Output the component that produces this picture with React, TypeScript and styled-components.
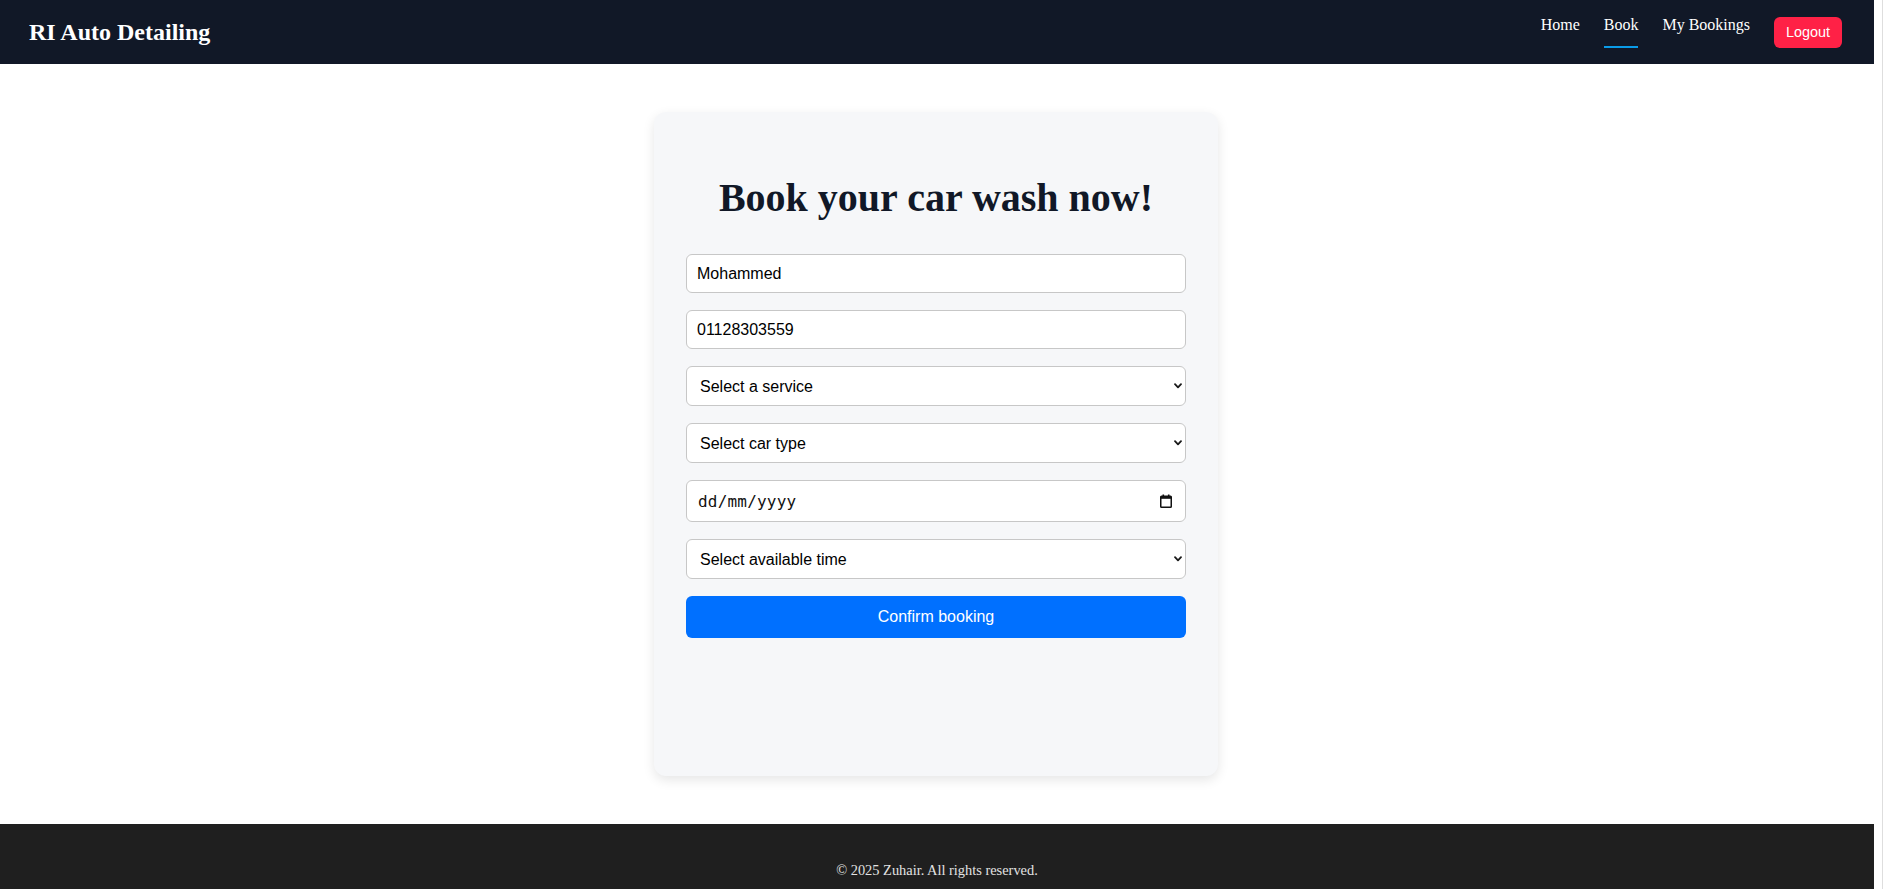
import React from "react";
import styled, { createGlobalStyle } from "styled-components";

const GlobalStyle = createGlobalStyle`
  *, *::before, *::after { box-sizing: border-box; }
  html {
    height: 100%;
    overflow: hidden;
    background: #ffffff;
    border-right: 1px solid #dedede;
  }
  body {
    margin: 0;
    height: 100%;
    overflow: hidden;
    font-family: "Liberation Serif", "Times New Roman", serif;
  }
`;

const Page = styled.div`
  width: calc(100% - 8px);
  display: flex;
  flex-direction: column;
`;

const NavBar = styled.header`
  height: 64px;
  display: flex;
  align-items: center;
  justify-content: space-between;
  padding: 0 32px 0 29px;
  background: #111827;
`;

const Logo = styled.h1`
  margin: 0;
  font-family: "Liberation Serif", "Times New Roman", serif;
  font-size: 24px;
  font-weight: 700;
  line-height: normal;
  color: #ffffff;
`;

const NavLinks = styled.nav`
  display: flex;
  align-items: center;
  gap: 24px;
`;

const NavLink = styled.a<{ $active?: boolean }>`
  color: #ffffff;
  text-decoration: none;
  font-family: "Liberation Serif", "Times New Roman", serif;
  font-size: 16px;
  line-height: normal;
  padding-bottom: 12px;
  border-bottom: 2px solid ${(p) => (p.$active ? "#0a9be8" : "transparent")};
  cursor: pointer;
`;

const LogoutButton = styled.button`
  height: 31px;
  padding: 0 12px;
  border: none;
  border-radius: 6px;
  background: #ff2146;
  color: #ffffff;
  font-family: "Liberation Sans", Arial, sans-serif;
  font-size: 14.4px;
  cursor: pointer;
`;

const Main = styled.main`
  display: flex;
  justify-content: center;
  padding: 48px 2px 48px 0;
`;

const Card = styled.section`
  width: 564px;
  min-height: 664px;
  padding: 32px;
  background: #f6f7f9;
  border-radius: 12px;
  box-shadow: 0 4px 12px rgba(0, 0, 0, 0.1);
`;

const Heading = styled.h2`
  margin: 32px 0 34px;
  font-family: "Liberation Serif", "Times New Roman", serif;
  font-size: 40px;
  font-weight: 700;
  line-height: 44px;
  text-align: center;
  color: #111827;
`;

const Form = styled.form`
  display: flex;
  flex-direction: column;
  gap: 17px;
`;

const TextInput = styled.input`
  height: 39px;
  width: 100%;
  padding: 0 10px;
  border: 1px solid #c7c7c7;
  border-radius: 6px;
  background: #ffffff;
  color: #000000;
  font-family: "Liberation Sans", Arial, sans-serif;
  font-size: 16px;
  outline: none;
`;

const SelectWrap = styled.div<{ $h?: number }>`
  position: relative;
  height: ${(p) => p.$h ?? 40}px;
`;

const Select = styled.select`
  appearance: none;
  -webkit-appearance: none;
  width: 100%;
  height: 100%;
  padding: 0 28px 0 13px;
  border: 1px solid #c7c7c7;
  border-radius: 6px;
  background: #ffffff;
  color: #000000;
  font-family: "Liberation Sans", Arial, sans-serif;
  font-size: 16px;
  outline: none;
`;

const Chevron = styled.svg`
  position: absolute;
  right: 4px;
  top: 50%;
  margin-top: -3px;
  width: 8px;
  height: 6px;
  pointer-events: none;
`;

const DateField = styled.label`
  height: 42px;
  display: flex;
  align-items: center;
  gap: 8px;
  padding: 0 13px 0 11px;
  border: 1px solid #c7c7c7;
  border-radius: 6px;
  background: #ffffff;
`;

const DateInput = styled.input`
  flex: 1;
  min-width: 0;
  border: none;
  outline: none;
  padding: 0;
  background: transparent;
  font-family: "DejaVu Sans Mono", "Liberation Mono", monospace;
  font-size: 16px;
  letter-spacing: 0.2px;
  color: #111111;
  &::placeholder {
    color: #111111;
    opacity: 1;
  }
`;

const SubmitButton = styled.button`
  height: 42px;
  border: none;
  border-radius: 6px;
  background: #0070ff;
  color: #ffffff;
  font-family: "Liberation Sans", Arial, sans-serif;
  font-size: 16px;
  cursor: pointer;
`;

const Footer = styled.footer`
  background: #1f1f1f;
  padding: 24px;
  text-align: center;
`;

const FooterText = styled.p`
  margin: 14.4px 0;
  font-family: "Liberation Serif", "Times New Roman", serif;
  font-size: 14.4px;
  color: #e2e2e2;
`;

const ChevronIcon = () => (
  <Chevron viewBox="0 0 8 6">
    <path d="M1 1.2 L4 4.4 L7 1.2" fill="none" stroke="#1a1a1a" strokeWidth="1.8" strokeLinecap="round" strokeLinejoin="round" />
  </Chevron>
);

const CalendarIcon = () => (
  <svg width="12" height="14" viewBox="0 0 12 14">
    <rect x="2.5" y="0.5" width="1.6" height="2.5" fill="#111" />
    <rect x="7.9" y="0.5" width="1.6" height="2.5" fill="#111" />
    <rect x="0.75" y="2.2" width="10.5" height="11" rx="0.8" fill="none" stroke="#111" strokeWidth="1.5" />
    <rect x="0.75" y="2.2" width="10.5" height="2.6" fill="#111" />
  </svg>
);

export default function App() {
  return (
    <>
      <GlobalStyle />
      <Page>
        <NavBar>
          <Logo>RI Auto Detailing</Logo>
          <NavLinks>
            <NavLink>Home</NavLink>
            <NavLink $active>Book</NavLink>
            <NavLink>My Bookings</NavLink>
            <LogoutButton type="button">Logout</LogoutButton>
          </NavLinks>
        </NavBar>
        <Main>
          <Card>
            <Heading>Book your car wash now!</Heading>
            <Form onSubmit={(e) => e.preventDefault()}>
              <TextInput type="text" defaultValue="Mohammed" />
              <TextInput type="tel" defaultValue="01128303559" />
              <SelectWrap>
                <Select defaultValue="">
                  <option value="">Select a service</option>
                  <option value="basic">Basic wash</option>
                  <option value="full">Full detailing</option>
                </Select>
                <ChevronIcon />
              </SelectWrap>
              <SelectWrap>
                <Select defaultValue="">
                  <option value="">Select car type</option>
                  <option value="sedan">Sedan</option>
                  <option value="suv">SUV</option>
                </Select>
                <ChevronIcon />
              </SelectWrap>
              <DateField>
                <DateInput type="text" placeholder="dd/mm/yyyy" />
                <CalendarIcon />
              </DateField>
              <SelectWrap>
                <Select defaultValue="">
                  <option value="">Select available time</option>
                  <option value="10">10:00</option>
                  <option value="12">12:00</option>
                </Select>
                <ChevronIcon />
              </SelectWrap>
              <SubmitButton type="submit">Confirm booking</SubmitButton>
            </Form>
          </Card>
        </Main>
        <Footer>
          <FooterText>© 2025 Zuhair. All rights reserved.</FooterText>
        </Footer>
      </Page>
    </>
  );
}
